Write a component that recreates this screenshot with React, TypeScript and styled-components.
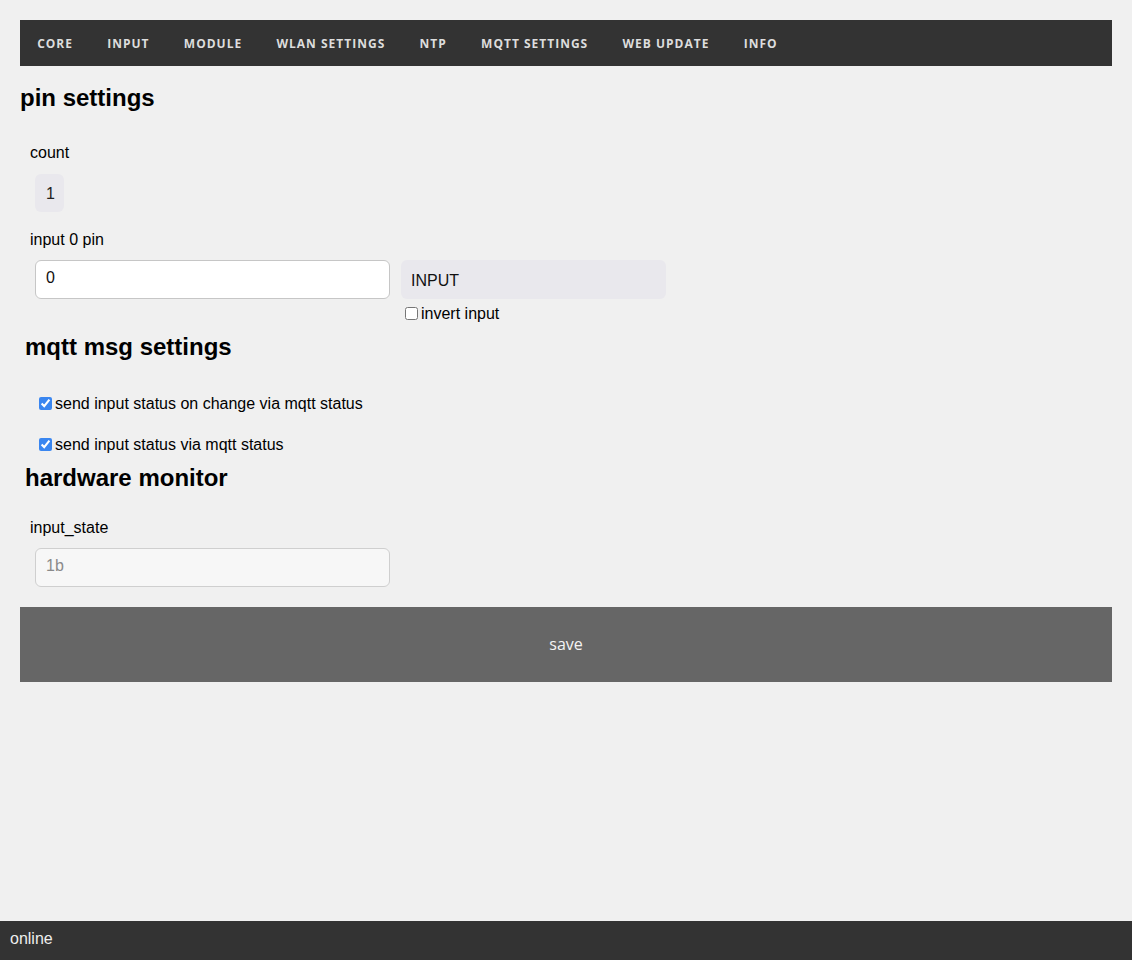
import styled, { createGlobalStyle } from 'styled-components'

const GlobalStyle = createGlobalStyle`
  body {
    margin: 20px;
    background-color: #f0f0f0;
    font-family: 'Liberation Sans', Arial, sans-serif;
    font-size: 16px;
    color: #000;
  }
`

const navItems = ['core', 'input', 'module', 'wlan settings', 'ntp', 'mqtt settings', 'web update', 'info']

export default function App() {
  return (
    <>
      <GlobalStyle />
      <NavBar>
        {navItems.map(item => (
          <NavItem key={item}>{item}</NavItem>
        ))}
      </NavBar>

      <SectionTitle $top={18} $bottom={30}>pin settings</SectionTitle>
      <Label>count</Label>
      <Control $top={11}>
        <CountSelect defaultValue='1'>
          <option value='1'>1</option>
        </CountSelect>
      </Control>

      <Label $top={17}>input 0 pin</Label>
      <Control $top={10}>
        <TextInput defaultValue='0' />
        <Column>
          <ModeSelect defaultValue='INPUT'>
            <option value='INPUT'>INPUT</option>
          </ModeSelect>
          <CheckRow $top={5} $left={0}>
            <input type='checkbox' />
            invert input
          </CheckRow>
        </Column>
      </Control>

      <SectionTitle $indent $top={10} $bottom={33}>mqtt msg settings</SectionTitle>
      <CheckRow $top={0} $left={15}>
        <input type='checkbox' defaultChecked />
        send input status on change via mqtt status
      </CheckRow>
      <CheckRow $top={22} $left={15}>
        <input type='checkbox' defaultChecked />
        send input status via mqtt status
      </CheckRow>

      <SectionTitle $indent $top={10} $bottom={25}>hardware monitor</SectionTitle>
      <Label>input_state</Label>
      <Control $top={10}>
        <TextInput disabled defaultValue='1b' />
      </Control>

      <SaveButton>save</SaveButton>

      <StatusBar>online</StatusBar>
    </>
  )
}

const NavBar = styled.nav`
  display: flex;
  height: 46px;
  background-color: #333;
`

const NavItem = styled.div`
  padding: 1px 17.15px 0;
  line-height: 45px;
  font-family: 'Open Sans', sans-serif;
  font-weight: 700;
  font-size: 12px;
  letter-spacing: 1px;
  text-transform: uppercase;
  color: #ddd;
`

const SectionTitle = styled.h2<{ $indent?: boolean; $top: number; $bottom: number }>`
  margin: ${p => p.$top}px 0 ${p => p.$bottom}px ${p => (p.$indent ? 5 : 0)}px;
  font-size: 24px;
  line-height: 28px;
  font-weight: 700;
`

const Label = styled.div<{ $top?: number }>`
  margin-top: ${p => p.$top ?? 0}px;
  padding: 1px 0 0 10px;
  line-height: 20px;
`

const Control = styled.div<{ $top: number }>`
  display: flex;
  align-items: flex-start;
  gap: 11px;
  margin-top: ${p => p.$top}px;
  padding-left: 15px;
`

const Column = styled.div`
  display: flex;
  flex-direction: column;
`

const CountSelect = styled.select`
  appearance: none;
  height: 38px;
  width: 29px;
  padding: 0 0 0 11px;
  border: none;
  border-radius: 6px;
  background-color: #e9e8ed;
  font-family: inherit;
  font-size: 16px;
  color: #222;
`

const ModeSelect = styled.select`
  appearance: none;
  height: 39px;
  width: 265px;
  padding: 2px 0 0 10px;
  border: none;
  border-radius: 6px;
  background-color: #e9e8ed;
  font-family: inherit;
  font-size: 16px;
  color: #111;
`

const TextInput = styled.input`
  box-sizing: border-box;
  height: 39px;
  width: 355px;
  padding: 0 10px 3px;
  border: 1px solid #c6c6c6;
  border-radius: 6px;
  background-color: #fff;
  font-family: inherit;
  font-size: 16px;
  color: #111;
  outline: none;
  &:disabled {
    background-color: #f7f7f7;
    border-color: #cfcfcf;
    color: #8a8a8a;
  }
`

const CheckRow = styled.label<{ $top: number; $left: number }>`
  display: flex;
  align-items: center;
  height: 19px;
  margin-top: ${p => p.$top}px;
  padding-left: ${p => p.$left}px;
  input {
    width: 13px;
    height: 13px;
    margin: 3px 3px 3px 4px;
    accent-color: #3a86f0;
  }
`

const SaveButton = styled.button`
  display: block;
  width: 100%;
  height: 75px;
  margin-top: 20px;
  padding: 0 0 1px;
  border: none;
  background-color: #666;
  font-family: 'Open Sans', sans-serif;
  font-size: 16px;
  color: #f4f4f4;
  cursor: pointer;
`

const StatusBar = styled.footer`
  position: fixed;
  left: 0;
  right: 0;
  bottom: 0;
  height: 39px;
  padding-left: 10px;
  line-height: 36px;
  background-color: #333;
  color: #eee;
`
